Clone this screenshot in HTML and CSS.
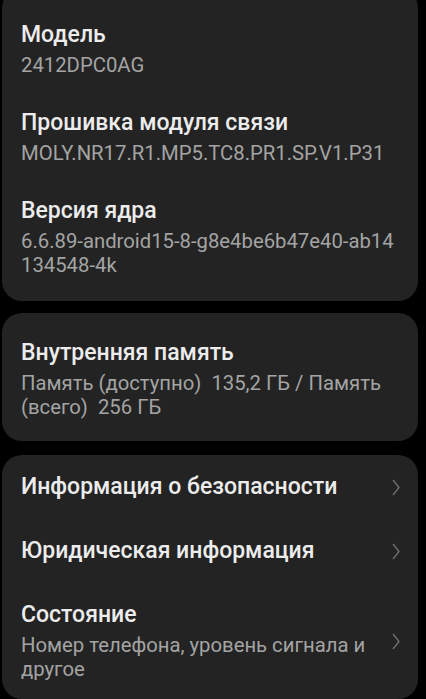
FILE: index.html
```html
<!DOCTYPE html>
<html lang="ru">
  <head>
    <meta charset="UTF-8" />
    <meta name="viewport" content="width=device-width, initial-scale=1.0" />
    <title>О телефоне</title>
    <link rel="stylesheet" href="styles.css">
  </head>
  <body>
    <section class="kort kort_info">
      <div class="punkt">
        <h2>Модель</h2>
        <p>2412DPC0AG</p>
      </div>
      <div class="punkt">
        <h2>Прошивка модуля связи</h2>
        <p>MOLY.NR17.R1.MP5.TC8.PR1.SP.V1.P31</p>
      </div>
      <div class="punkt">
        <h2>Версия ядра</h2>
        <p class="brud">6.6.89-android15-8-g8e4be6b47e40-ab14134548-4k</p>
      </div>
    </section>

    <section class="kort kort_hukommelse">
      <div class="punkt">
        <h2>Внутренняя память</h2>
        <p>Память (доступно)&nbsp; 135,2 ГБ / Память (всего)&nbsp; 256 ГБ</p>
      </div>
    </section>

    <section class="kort kort_menu">
      <a class="linje">
        <div class="tekst">
          <h2>Информация о безопасности</h2>
        </div>
        <svg class="pil" viewBox="0 0 8 17"><path d="M1 1 L7 8.5 L1 16" /></svg>
      </a>
      <a class="linje">
        <div class="tekst">
          <h2>Юридическая информация</h2>
        </div>
        <svg class="pil" viewBox="0 0 8 17"><path d="M1 1 L7 8.5 L1 16" /></svg>
      </a>
      <a class="linje">
        <div class="tekst">
          <h2>Состояние</h2>
          <p>Номер телефона, уровень сигнала и другое</p>
        </div>
        <svg class="pil" viewBox="0 0 8 17"><path d="M1 1 L7 8.5 L1 16" /></svg>
      </a>
    </section>
  </body>
</html>
```

FILE: styles.css
```css
body {
  margin: 0;
  padding: 0 8px 0 2px;
  background-color: #000;
  font-family: Roboto, "Liberation Sans", sans-serif;
}

h2 {
  margin: 0 0 4px 0;
  font-size: 23px;
  font-weight: 500;
  line-height: 28px;
  color: #ececec;
}

p {
  margin: 0;
  font-size: 20.3px;
  font-weight: 400;
  line-height: 24px;
  color: #a4a4a4;
}

.kort {
  background-color: #232323;
  border-radius: 20px;
}

.kort_info {
  margin-top: -12px;
  padding: 33px 16px 24px 19px;
  display: flex;
  flex-direction: column;
  gap: 32px;
}

.brud {
  word-break: break-all;
}

.kort_hukommelse {
  margin-top: 12px;
  padding: 26px 20px 22px 19px;
}

.kort_menu {
  margin-top: 14px;
}

.linje {
  display: flex;
  align-items: center;
  gap: 16px;
  padding: 18px 18px 18px 19px;
}

.linje h2 {
  margin: 0;
}

.linje p {
  margin-top: 4px;
}

.tekst {
  flex: 1;
}

.pil {
  width: 8px;
  height: 17px;
  flex-shrink: 0;
  fill: none;
  stroke: #6f6f6f;
  stroke-width: 1.4;
}
```
